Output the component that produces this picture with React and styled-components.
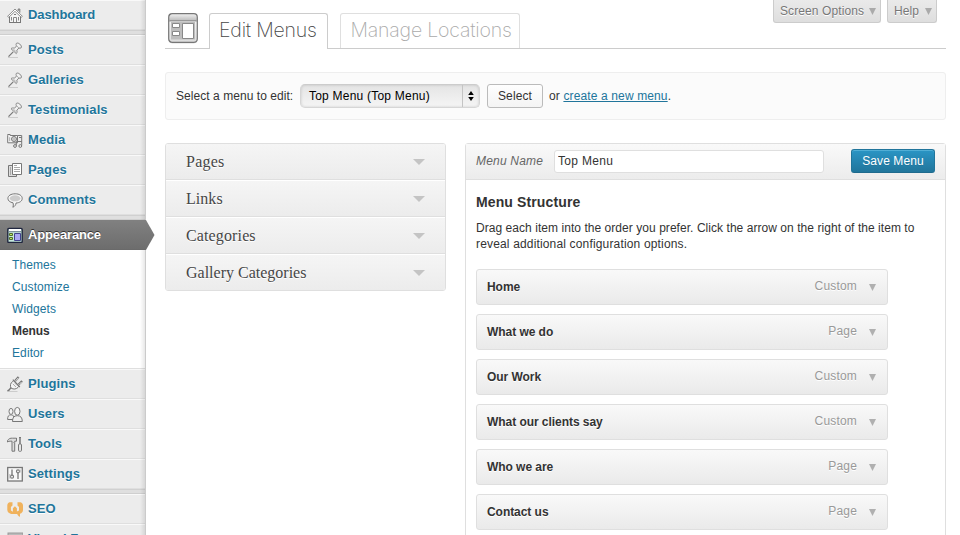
import React from 'react';
import styled, { createGlobalStyle, css } from 'styled-components';

const GlobalStyle = createGlobalStyle`
  *, *::before, *::after { box-sizing: border-box; }
  html, body { margin: 0; padding: 0; background: #fff; }
  body {
    overflow: hidden;
    color: #333;
    font: 12px/16px "Liberation Sans", Arial, sans-serif;
    letter-spacing: 0.05px;
  }
  svg { display: block; }
`;

const Page = styled.div`
  display: flex;
  width: 960px;
  height: 535px;
  overflow: hidden;
`;

/* ---------- Sidebar ---------- */

const Sidebar = styled.nav`
  position: relative;
  flex: none;
  width: 146px;
  height: 535px;
  background: #ececec;
  &::after {
    content: '';
    position: absolute;
    inset: 0 0 0 auto;
    width: 6px;
    border-right: 1px solid #cbcbcb;
    background: linear-gradient(to right, rgba(0, 0, 0, 0), rgba(0, 0, 0, 0.09));
    pointer-events: none;
  }
`;

const NavRow = styled.a`
  display: flex;
  align-items: center;
  gap: 5px;
  height: 30px;
  padding-left: 7px;
  border-top: 1px solid #f9f9f9;
  border-bottom: 1px solid #dfdfdf;
  color: #21759b;
  font-weight: bold;
  font-size: 13px;
  line-height: 18px;
  letter-spacing: ${(p) => p.$ls ?? 0}px;
  text-shadow: 0 1px 0 #fff;
  white-space: nowrap;
  svg { flex: none; }
  ${(p) =>
    p.$active &&
    css`
      position: relative;
      z-index: 1;
      border-top-color: #808080;
      border-bottom-color: #6a6a6a;
      background: linear-gradient(#808080, #6d6d6d);
      color: #fff;
      text-shadow: 0 -1px 0 #333;
    `}
`;

const ActiveArrow = styled.svg`
  position: absolute;
  top: -1px;
  left: 145px;
`;

const NavSeparator = styled.div`
  height: 5px;
  border-top: 1px solid #d0d0d0;
  border-bottom: 1px solid #cfcfcf;
  background: #dfdfdf;
`;

const SubMenu = styled.div`
  display: flex;
  flex-direction: column;
  height: 119px;
  padding: 4px 0 0 12px;
  border-bottom: 1px solid #dfdfdf;
  background: #fff;
`;

const SubLink = styled.a`
  height: 22px;
  line-height: 22px;
  color: ${(p) => (p.$current ? '#333' : '#21759b')};
  font-weight: ${(p) => (p.$current ? 'bold' : 'normal')};
  letter-spacing: ${(p) => (p.$current ? -0.1 : 0.1)}px;
`;

/* ---------- Header ---------- */

const Main = styled.main`
  flex: none;
  width: 781px;
  margin-left: 19px;
`;

const Header = styled.header`
  display: flex;
  align-items: flex-start;
  height: 49px;
  border-bottom: 1px solid #ccc;
`;

const HeaderIcon = styled.div`
  margin: 13px 11px 0 3px;
`;

const Tab = styled.a`
  width: ${(p) => p.$width}px;
  height: ${(p) => (p.$active ? 36 : 35)}px;
  margin: 13px 12px 0 0;
  padding-left: ${(p) => (p.$active ? 9 : 9.5)}px;
  border: 1px solid ${(p) => (p.$active ? '#ccc' : '#dfdfdf')};
  border-bottom: 0;
  border-radius: 3px 3px 0 0;
  background: #fff;
  color: ${(p) => (p.$active ? '#464646' : '#aaa')};
  font: 200 19.5px/33px Inter, "Liberation Sans", sans-serif;
  letter-spacing: ${(p) => p.$ls}px;
  white-space: nowrap;
`;

const MetaLinks = styled.div`
  display: flex;
  gap: 6px;
  margin: 0 9px 0 auto;
`;

const MetaLink = styled.a`
  display: flex;
  justify-content: space-between;
  width: ${(p) => p.$width}px;
  height: 23px;
  padding: 0 4px 0 6px;
  border: 1px solid #ccc;
  border-top: 0;
  border-radius: 0 0 3px 3px;
  background: linear-gradient(#eaeaea, #dedede);
  color: #777;
  line-height: 22px;
  letter-spacing: 0.1px;
  text-shadow: 0 1px 0 #fff;
  white-space: nowrap;
  svg { margin-top: 8px; }
`;

/* ---------- Menu picker ---------- */

const ManageBar = styled.section`
  display: flex;
  align-items: center;
  height: 48px;
  margin-top: 23px;
  padding: 0 10px;
  border: 1px solid #eee;
  border-radius: 3px;
  background: #fbfbfb;
  white-space: nowrap;
`;

const PickerLabel = styled.label`
  width: 124px;
`;

const Picker = styled.div`
  display: flex;
  justify-content: space-between;
  width: 180px;
  height: 24px;
  padding-left: 8px;
  border: 1px solid #d6d6d6;
  border-top-color: #ccc;
  border-radius: 5px;
  background: linear-gradient(#e4e4e4, #f5f5f5);
  box-shadow: inset 0 0 3px rgba(0, 0, 0, 0.16);
  color: #000;
  line-height: 22px;
  letter-spacing: 0.22px;
`;

const PickerArrows = styled.span`
  display: grid;
  place-items: center;
  width: 17px;
  border-left: 1px solid #c4c4c4;
`;

const Button = styled.button`
  width: ${(p) => (p.$primary ? 84 : 56)}px;
  height: 24px;
  margin: 0;
  padding: 0;
  border: 1px solid;
  border-radius: 3px;
  font: 12px/22px "Liberation Sans", Arial, sans-serif;
  letter-spacing: 0.1px;
  ${(p) =>
    p.$primary
      ? css`
          align-self: flex-start;
          margin-top: 5px;
          border-color: #21759b #21759b #1e6a8d;
          background: linear-gradient(#2a95c5, #21759b);
          box-shadow: inset 0 1px 0 rgba(120, 200, 230, 0.5);
          color: #fff;
          text-shadow: 0 1px 0 rgba(0, 0, 0, 0.1);
        `
      : css`
          margin: 0 6px 0 7px;
          border-color: #bbb;
          background: linear-gradient(#fefefe, #f4f4f4);
          color: #333;
        `}
`;

const PickerNote = styled.span`
  letter-spacing: 0.13px;
`;

const TextLink = styled.a`
  color: #21759b;
  text-decoration: underline;
`;

/* ---------- Columns ---------- */

const Columns = styled.div`
  display: flex;
  align-items: flex-start;
  gap: 19px;
  margin-top: 23px;
`;

const Accordion = styled.div`
  width: 281px;
  border: 1px solid #dfdfdf;
  border-radius: 3px;
  overflow: hidden;
`;

const AccordionRow = styled.div`
  display: flex;
  align-items: center;
  justify-content: space-between;
  height: 37px;
  padding: 0 20px;
  border-top: 1px solid #fff;
  border-bottom: 1px solid #dfdfdf;
  background: linear-gradient(#f5f5f5, #ececec);
  color: #464646;
  font: 16px/20px "Liberation Serif", Georgia, serif;
  letter-spacing: ${(p) => p.$ls ?? 0}px;
  text-shadow: 0 1px 0 #fff;
  &:first-child { height: 36px; border-top: 0; }
  &:last-child { height: 36px; border-bottom: 0; }
`;

const Editor = styled.section`
  width: 481px;
  height: 400px;
  border: 1px solid #dfdfdf;
  border-radius: 3px 3px 0 0;
  background: #fff;
`;

const EditorHeader = styled.div`
  display: flex;
  align-items: center;
  height: 36px;
  padding: 0 10px;
  border-bottom: 1px solid #dfdfdf;
  background: linear-gradient(#f9f9f9, #ececec);
`;

const NameLabel = styled.label`
  width: 78px;
  margin-top: -1px;
  color: #666;
  font-style: italic;
  letter-spacing: 0.2px;
`;

const NameInput = styled.input`
  width: 270px;
  height: 23px;
  margin: 0 27px 0 0;
  padding: 0 3px 1px;
  border: 1px solid #dfdfdf;
  border-radius: 3px;
  outline: 0;
  background: #fff;
  color: #333;
  font: 12px/16px "Liberation Sans", Arial, sans-serif;
  letter-spacing: 0.3px;
`;

const EditorBody = styled.div`
  padding: 12px 10px 0;
`;

const SectionTitle = styled.h3`
  margin: 0;
  color: #333;
  font-size: 14px;
  line-height: 20px;
  letter-spacing: 0.12px;
`;

const HelpText = styled.p`
  margin: 8px 0 17px;
  line-height: 16px;
  white-space: nowrap;
  span { display: block; }
  span:last-child { letter-spacing: 0.16px; }
`;

const MenuItems = styled.div`
  display: flex;
  flex-direction: column;
  gap: 9px;
`;

const MenuItem = styled.div`
  display: flex;
  align-items: center;
  width: 412px;
  height: 36px;
  padding: 0 11px 0 10px;
  border: 1px solid #dfdfdf;
  border-radius: 3px;
  background: linear-gradient(#f9f9f9, #eaeaea);
  font-weight: bold;
  text-shadow: 0 1px 0 #fff;
  letter-spacing: -0.05px;
`;

const ItemType = styled.span`
  margin: -2px 12px 0 auto;
  color: #999;
  font-weight: normal;
  letter-spacing: 0.18px;
`;

/* ---------- Icons ---------- */

const Down = ({ w = 7, h = 7, fill = '#aaa', top = 0 }) => (
  <svg width={w} height={h + top} viewBox={`0 0 ${w} ${h + top}`}>
    <path d={`M0 ${top}H${w}L${w / 2} ${h + top}Z`} fill={fill} />
  </svg>
);

const Icon = ({ children }) => (
  <svg width="16" height="16" viewBox="0 0 16 16" fill="none" stroke="#777" strokeWidth="1">
    {children}
  </svg>
);

const HouseIcon = () => (
  <Icon>
    <path d="M2.5 9v6.5h11V9L8 3.8z" fill="#f5f5f5" />
    <path d="M11.2 4V2h1.6v3.6" fill="#ddd" />
    <path d="M.6 9.3 8 2l7.4 7.3-1.2 1L8 4.4l-6.2 5.900z" fill="#fff" strokeWidth=".8" />
    <path d="M6.500 15.500v-5h3v5M4.500 10v3.500M11.500 10v3.500" stroke="#888" />
    <path d="M7 7.500h2M2 15.500h12" />
  </Icon>
);

const PinIcon = () => (
  <Icon>
    <path d="M1 15.500h10" stroke="#ccc" />
    <path d="M1.500 14.600 6.200 9.800" stroke="#777" strokeWidth="1.200" />
    <path d="M9.200 1.600c.8-1 2.300-.6 3.600.5s2.200 2.900 1.300 3.800c-.7.5-1.500.2-2.100.1L9.800 8.100c.4 1.400.3 2.700-.5 3.500L4 6.700c.8-.8 2.200-1 3.500-.5l2-2.200c-.3-.9-.7-1.700-.3-2.400z" fill="#f2f2f2" stroke="#888" />
    <path d="M9.900 3.800c.4 1 1.300 2 2.300 2.400M6.300 7.100l2.500 2.300" stroke="#aaa" />
  </Icon>
);

const MediaIcon = () => (
  <Icon>
    <path d="M.7 3.500V2.500h2.500v1h7.300v7.300H.7z" fill="#f6f6f6" />
    <path d="M2.700 5.200v4" stroke="#aaa" />
    <circle cx="7" cy="7" r="2.500" fill="#ddd" />
    <circle cx="7" cy="7" r="1" fill="#fff" stroke="#999" strokeWidth=".7" />
    <path d="M10.500 3.500h4.200v10M9.300 14V9.500h5.400M12 5.500h2.700" fill="none" />
    <circle cx="8" cy="14" r="1.400" fill="#eee" />
    <circle cx="13.300" cy="14" r="1.400" fill="#eee" />
  </Icon>
);

const PagesIcon = () => (
  <Icon>
    <path d="M6 3.500H1.500v11h8v-1.500" fill="#ddd" />
    <path d="M3.500 5v8" stroke="#aaa" />
    <path d="M5.500 1.500h9v11h-9z" fill="#fff" />
    <path d="M7 3.500h3M7 5.500h6M7 7.500h6M7 9.500h6" stroke="#aaa" />
  </Icon>
);

const CommentIcon = () => (
  <Icon>
    <path d="M8.200 1.800c4.200 0 7 1.900 7 4.600s-2.500 4.400-6.100 4.600c-.2 1.700-1.400 3.700-3.300 4.200.6-1.200.7-3 .2-4.400C3 10.300.9 8.700.9 6.400c0-2.700 3-4.600 7.300-4.600z" fill="#f5f5f5" />
    <ellipse cx="8.100" cy="6.300" rx="5.300" ry="3" fill="#ccc" stroke="none" />
  </Icon>
);

const AppearanceIcon = () => (
  <Icon>
    <rect x=".8" y="1.500" width="14.400" height="14" rx="1" fill="#c5e8dc" stroke="#20263f" strokeWidth="1.400" />
    <path d="M2 3h12" stroke="#fff" strokeWidth="2" />
    <path d="M2 4.700h12" stroke="#555e78" strokeWidth=".8" />
    <path d="M2.500 6.500h3v2h-3zM2.500 10.500h3v2h-3z" fill="#b8e864" stroke="#526b2e" />
    <path d="M7.500 6.500h6v7h-6z" fill="#aaa6f4" stroke="#42428c" />
  </Icon>
);

const PlugIcon = () => (
  <Icon>
    <path d="M.5 15.500h10" stroke="#ccc" />
    <path d="M.3 14.600c1.800.2 2.200-1 2.700-1.800l1.300-1.200" strokeWidth="1.400" />
    <path d="M4.100 12.100C2.800 9.800 3.400 6.800 5.800 5.400l1-.7 5.200 5.500-1 1.200c-1.600 1.700-4.500 2.300-6.900.7z" fill="#f4f4f4" />
    <path d="m5.800 3.700 7 7.300" strokeWidth="1.200" />
    <path d="m8 4.900 3.600-3.800M11.600 8.600l3.500-3.600" strokeWidth="2.200" />
    <path d="m8.600 4.800 2.700-2.900M12.300 8.300 14.600 6" stroke="#fff" strokeWidth=".8" />
    <path d="m5.800 7.800 3.200 3.300M7.500 6.700l2.700 2.800" stroke="#aaa" />
  </Icon>
);

const UsersIcon = () => (
  <Icon>
    <path d="M.6 13.500c0-3 .8-4.700 3.400-4.700S7 10.500 7 13.500z" fill="#eee" />
    <ellipse cx="4" cy="5.400" rx="2" ry="3" fill="#f5f5f5" />
    <path d="M5.500 15.500c0-3.900 1.400-5.800 4.800-5.800s5 1.900 5 5.800z" fill="#eee" />
    <ellipse cx="10.300" cy="5.300" rx="2.700" ry="3.900" fill="#f5f5f5" />
  </Icon>
);

const ToolsIcon = () => (
  <Icon>
    <path d="M.5 4.700C1.700 2.500 3.500 2 5.500 2.200h4v3H7.700v10H5v-10H3.200c-.9-.1-1.700.1-2.700.8z" fill="#ddd" />
    <path d="M5.200 6.500h2.300" stroke="#aaa" />
    <path d="M13 1v7" strokeWidth="1.500" />
    <rect x="11.500" y="8" width="3" height="7.300" rx="1" fill="#e5e5e5" />
    <path d="M9.500 2v3M12 1.500h2" />
  </Icon>
);

const SettingsIcon = () => (
  <Icon>
    <rect x=".7" y="1.500" width="14.600" height="13.500" fill="#f8f8f8" strokeWidth="1.300" />
    <path d="M5 3.500V9M11 7v6" strokeWidth="1.300" />
    <circle cx="5" cy="10.700" r="1.500" fill="#fff" strokeWidth="1.200" />
    <circle cx="11" cy="5.300" r="1.500" fill="#fff" strokeWidth="1.200" />
    <path d="M2.800 12.500V8M13.200 3.500v3" stroke="#bbb" />
  </Icon>
);

const SeoIcon = () => (
  <Icon>
    <path
      d="M2.500 1.200h3v3.400L3.900 5.900v3.600l2 1.200V7.300l2-2 2 2v3.200l2.100-1V5.900l-1.500-1.300V1.200h3c1.600.5 2.500 1.700 2.500 3.300v4.300c0 2-1.100 3.400-3 4v2.900c-1.300-.4-2.300-1.500-2.800-2.800H4.200c-2.400-.4-3.900-1.800-3.900-4.100V4.500c0-1.600.8-2.800 2.200-3.300z"
      fill="#f0b25c"
      stroke="none"
    />
  </Icon>
);

const BoxIcon = () => (
  <Icon>
    <rect x="1" y="2" width="15" height="13" fill="#bbb" stroke="#999" />
  </Icon>
);

const ThemeIcon = () => (
  <svg width="30" height="31" viewBox="0 0 30 31">
    <defs>
      <linearGradient id="themeBar" x1="0" y1="0" x2="0" y2="1">
        <stop offset="0" stopColor="#f2f2f2" />
        <stop offset=".26" stopColor="#b8b8b8" />
        <stop offset=".3" stopColor="#f0f0f0" />
        <stop offset="1" stopColor="#dcdcdc" />
      </linearGradient>
    </defs>
    <rect x=".7" y="1.200" width="28.600" height="29" rx="3.500" fill="#bbb" />
    <rect x=".7" y=".7" width="28.600" height="28.600" rx="3.500" fill="url(#themeBar)" stroke="#777" strokeWidth="1.200" />
    <path d="M1.500 7.500h27" stroke="#999" />
    <path d="M3 9h24v17.500H3z" fill="#bdbdbd" />
    <path d="M4.500 10.500h7v4h-7zM4.500 18.500h7v4h-7zM14.500 10.500h11v15h-11z" fill="#fff" stroke="#888" />
  </svg>
);

/* ---------- Page ---------- */

const contentNav = [
  ['Posts', PinIcon],
  ['Galleries', PinIcon],
  ['Testimonials', PinIcon],
  ['Media', MediaIcon],
  ['Pages', PagesIcon],
  ['Comments', CommentIcon],
];

const adminNav = [
  ['Plugins', PlugIcon],
  ['Users', UsersIcon],
  ['Tools', ToolsIcon],
  ['Settings', SettingsIcon],
];

const subLinks = ['Themes', 'Customize', 'Widgets', 'Menus', 'Editor'];

const accordionRows = [
  ['Pages', 0.25],
  ['Links', 0.05],
  ['Categories', 0.13],
  ['Gallery Categories', 0],
];

const menuItems = [
  ['Home', 'Custom'],
  ['What we do', 'Page'],
  ['Our Work', 'Custom'],
  ['What our clients say', 'Custom'],
  ['Who we are', 'Page'],
  ['Contact us', 'Page'],
];

const NavItem = ({ label, icon: Glyph, spacing = 0.1 }) => (
  <NavRow $ls={spacing}>
    <Glyph />
    {label}
  </NavRow>
);

export default function App() {
  return (
    <>
      <GlobalStyle />
      <Page>
        <Sidebar>
          <NavItem label="Dashboard" icon={HouseIcon} spacing={-0.08} />
          <NavSeparator />
          {contentNav.map(([label, icon]) => (
            <NavItem key={label} label={label} icon={icon} />
          ))}
          <NavSeparator />
          <NavRow $active $ls={-0.15}>
            <AppearanceIcon />
            Appearance
            <ActiveArrow width="10" height="30" viewBox="0 0 10 30">
              <defs>
                <linearGradient id="arrowFill" x1="0" y1="0" x2="0" y2="1">
                  <stop offset="0" stopColor="#808080" />
                  <stop offset="1" stopColor="#6d6d6d" />
                </linearGradient>
              </defs>
              <path d="M0 0h1l8.500 15L1 30H0z" fill="url(#arrowFill)" />
            </ActiveArrow>
          </NavRow>
          <SubMenu>
            {subLinks.map((label) => (
              <SubLink key={label} $current={label === 'Menus'}>
                {label}
              </SubLink>
            ))}
          </SubMenu>
          {adminNav.map(([label, icon]) => (
            <NavItem key={label} label={label} icon={icon} />
          ))}
          <NavSeparator />
          <NavItem label="SEO" icon={SeoIcon} />
          <NavItem label="Visual Form" icon={BoxIcon} />
        </Sidebar>

        <Main>
          <Header>
            <HeaderIcon>
              <ThemeIcon />
            </HeaderIcon>
            <Tab $active $width={119} $ls={-0.2}>Edit Menus</Tab>
            <Tab $width={180} $ls={-0.2}>Manage Locations</Tab>
            <MetaLinks>
              <MetaLink $width={108}>
                Screen Options
                <Down fill="#aaa" />
              </MetaLink>
              <MetaLink $width={50}>
                Help
                <Down fill="#aaa" />
              </MetaLink>
            </MetaLinks>
          </Header>

          <ManageBar>
            <PickerLabel>Select a menu to edit:</PickerLabel>
            <Picker>
              Top Menu (Top Menu)
              <PickerArrows>
                <svg width="6" height="10" viewBox="0 0 6 10">
                  <path d="M3 0l2.800 4H.2zM3 10 .2 6h5.600z" fill="#000" />
                </svg>
              </PickerArrows>
            </Picker>
            <Button>Select</Button>
            <PickerNote>
              or <TextLink>create a new menu</TextLink>.
            </PickerNote>
          </ManageBar>

          <Columns>
            <Accordion>
              {accordionRows.map(([label, spacing]) => (
                <AccordionRow key={label} $ls={spacing}>
                  {label}
                  <Down w={12} h={6} fill="#c4c4c4" />
                </AccordionRow>
              ))}
            </Accordion>

            <Editor>
              <EditorHeader>
                <NameLabel>Menu Name</NameLabel>
                <NameInput defaultValue="Top Menu" />
                <Button $primary>Save Menu</Button>
              </EditorHeader>
              <EditorBody>
                <SectionTitle>Menu Structure</SectionTitle>
                <HelpText>
                  <span>Drag each item into the order you prefer. Click the arrow on the right of the item to</span>
                  <span>reveal additional configuration options.</span>
                </HelpText>
                <MenuItems>
                  {menuItems.map(([label, type]) => (
                    <MenuItem key={label}>
                      {label}
                      <ItemType>{type}</ItemType>
                      <Down fill="#b0b0b0" top={1} />
                    </MenuItem>
                  ))}
                </MenuItems>
              </EditorBody>
            </Editor>
          </Columns>
        </Main>
      </Page>
    </>
  );
}
